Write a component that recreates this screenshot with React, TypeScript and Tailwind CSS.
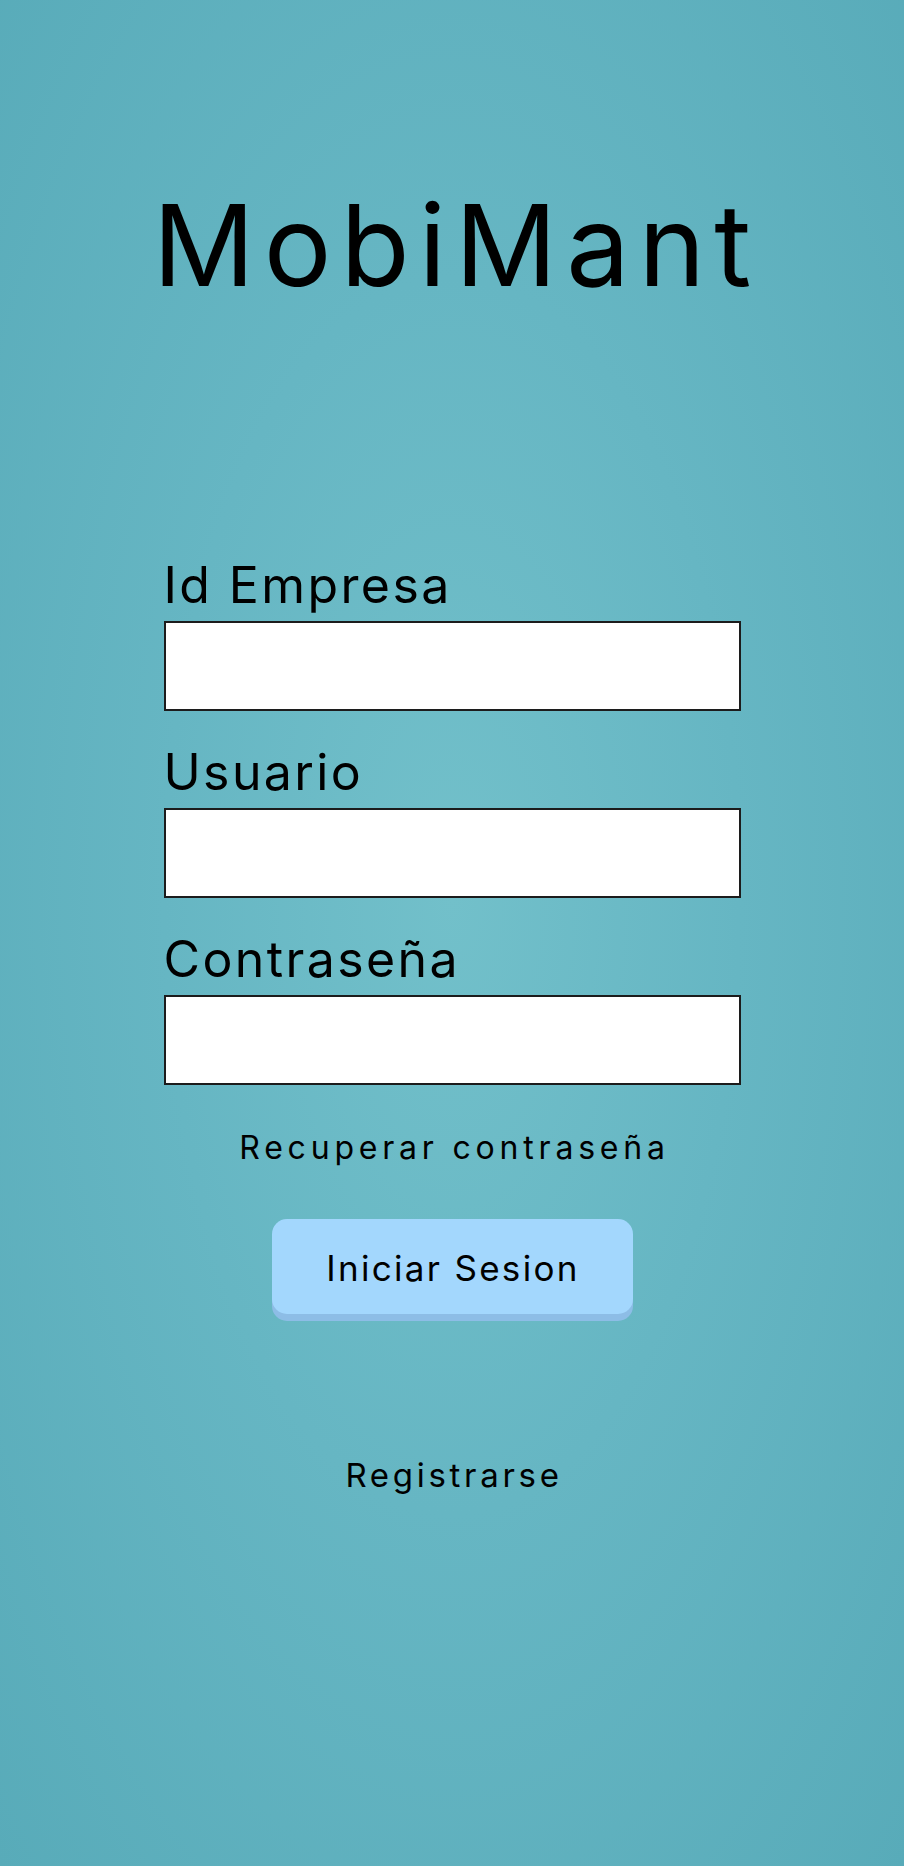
import React from 'react';

const font = { fontFamily: 'Inter, "Noto Sans", sans-serif' };

function Field({ label, type = 'text' }: { label: string; type?: string }) {
  return (
    <div className="flex flex-col">
      <label className="text-[50px] leading-none tracking-[2.4px] text-black mb-[11px]">{label}</label>
      <input
        type={type}
        className="h-[90px] w-full border-2 border-[#1c1c1c] bg-white outline-none px-3 text-[28px]"
      />
    </div>
  );
}

export default function App() {
  return (
    <div
      style={font}
      className="min-h-[1866px] w-full flex flex-col bg-[radial-gradient(ellipse_at_50%_48%,#72c0ca_0%,#66b6c3_45%,#58abb9_100%)] text-black"
    >
      <h1 className="mt-[189px] pl-[9px] text-center text-[113px] leading-none tracking-[9px] font-normal">
        MobiMant
      </h1>

      <div className="mt-[258px] mx-auto w-[577px] flex flex-col gap-[36px]">
        <Field label="Id Empresa" />
        <Field label="Usuario" />
        <Field label="Contraseña" type="password" />
      </div>

      <div className="flex flex-col items-center">
        <a className="mt-[47px] pl-[5px] text-[32px] leading-none tracking-[4.8px] cursor-pointer">
          Recuperar contraseña
        </a>

        <button className="mt-[55px] w-[361px] h-[95px] rounded-[15px] bg-[#a3d7fd] shadow-[0_7px_0_#8dbde6] flex items-center justify-center pt-1 pl-[2px] text-[35px] leading-none tracking-[2.3px]">
          Iniciar Sesion
        </button>

        <a className="mt-[145px] pl-[4px] text-[33px] leading-none tracking-[3.7px] cursor-pointer">
          Registrarse
        </a>
      </div>
    </div>
  );
}
